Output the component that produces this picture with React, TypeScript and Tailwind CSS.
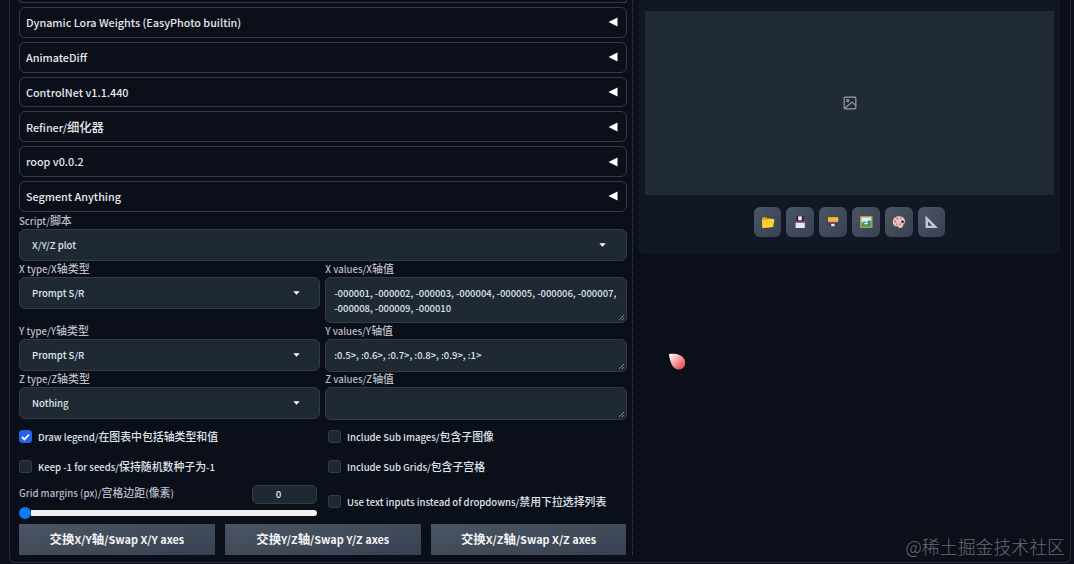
import React from 'react';

const HAN = /([\u4e00-\u9fff]+)/;

const ACCORDIONS = [
  'Dynamic Lora Weights (EasyPhoto builtin)',
  'AnimateDiff',
  'ControlNet v1.1.440',
  'Refiner/细化器',
  'roop v0.0.2',
  'Segment Anything',
];

// Han glyphs are set slightly larger than the Latin next to them
function Mixed({ text }: { text: string }) {
  return (
    <>
      {text.split(HAN).map((part, i) =>
        HAN.test(part) ? <span key={i} className="text-[1.14em]">{part}</span> : part
      )}
    </>
  );
}

function Label({ text }: { text: string }) {
  return <div className="flex h-4 items-center text-[9.6px] font-medium leading-4 text-[#b9bdc6]"><span><Mixed text={text} /></span></div>;
}

function Select({ value, wide }: { value: string; wide?: boolean }) {
  return (
    <div className={`flex h-8 items-center justify-between rounded-md border border-[#323c4a] bg-[#1f2933] pl-3 text-[9.55px] font-medium text-[#dfe3ea] ${wide ? 'pr-5' : 'pr-[19px]'}`}>
      <span>{value}</span>
      <svg width="7" height="4" viewBox="0 0 7 4"><path d="M0.3 0.2h6.4L3.5 3.8z" fill="#fff" /></svg>
    </div>
  );
}

function Area({ value, tall }: { value: string; tall?: boolean }) {
  return (
    <div className={`relative rounded-md border border-[#323c4a] bg-[#1f2933] px-2 pt-2 text-[9.45px] font-medium leading-[15px] text-[#dfe3ea] ${tall ? 'h-[46px]' : 'h-[33px]'}`}>
      <div className="whitespace-pre">{value}</div>
      <svg className="absolute right-0.5 bottom-0.5" width="5" height="5" viewBox="0 0 5 5" stroke="#9aa1ab" strokeWidth="0.8"><path d="M0 5L5 0M3 5L5 3" /></svg>
    </div>
  );
}

function Check({ text, checked }: { text: string; checked?: boolean }) {
  return (
    <div className="flex h-4 items-center gap-1.5 text-[9.55px] font-medium leading-4 text-[#dfe3ea]">
      <span className={`flex size-[13px] shrink-0 items-center justify-center rounded-[3px] border ${checked ? 'border-[#2563eb] bg-[#2563eb]' : 'border-[#333c48] bg-[#1f2933]'}`}>
        {checked && <svg width="9" height="8" viewBox="0 0 9 8" fill="none" stroke="#fff" strokeWidth="1.8"><path d="M1 4l2.4 2.4L8 1.5" /></svg>}
      </span>
      <span className="whitespace-nowrap"><Mixed text={text} /></span>
    </div>
  );
}

const TOOLS = [
  <g key="folder">
    <path d="M1 3.2l1-1 3.5.3 1 1 5 .2.3 1.5L10.8 12 1.5 13z" fill="#e9a90d" />
    <path d="M1 5l5 .2 1.500-1.400 6 .5L12.200 12l-10.700 1z" fill="#fcd22f" />
  </g>,
  <g key="floppy">
    <path d="M3.5 1h7v6h-7z" fill="#20232d" />
    <path d="M5.2 1.3h3.6v4H5.2z" fill="#f4eff5" />
    <path d="M2 6h10.5v2H2z" fill="#8d3a72" />
    <path d="M2.6 7.8h9.2V13H2.6z" fill="#efe4f3" />
  </g>,
  <g key="box">
    <path d="M2 2h10v5.500H2z" fill="#e9a43a" />
    <path d="M2 3.500h10.500v2H2z" fill="#f7c33d" />
    <path d="M1.3 7.5h11.5v1.600L10 11H4L1.300 9z" fill="#55306f" />
    <path d="M5.200 8.800h3.400v2.400H5.200z" fill="#f1e9f7" />
  </g>,
  <g key="picture">
    <path d="M1 1h12.500v12H1z" fill="#b9954c" />
    <path d="M2.400 2.400h9.700v9.200H2.400z" fill="#d9f1ea" />
    <path d="M2.400 8l2.800-2 2 1.500 3-2.600 1.900 1.400v5.300H2.400z" fill="#25a18e" />
    <path d="M2.400 10l3-.8 3 1 3.700-2v3.400H2.400z" fill="#4f8f3f" />
    <path d="M5 8.500l3-1 1 1.200-3 .8z" fill="#fff" />
  </g>,
  <g key="palette">
    <path d="M7 1.200c-3.800 0-6.200 2.400-6.200 5.700 0 3 2 4.600 4 4.300 1.400-.2 1.600.2 1.800 1.200.3 1.200 3.400.5 4.200-1 .6-1.200.5-2 1.300-2.600C14 7 13.500 1.200 7 1.200z" fill="#f0c0bd" />
    <circle cx="3.200" cy="6.500" r="0.900" fill="#c64661" />
    <circle cx="5.200" cy="3.600" r="0.900" fill="#a65290" />
    <circle cx="8.800" cy="3.400" r="0.900" fill="#7c8fb0" />
    <circle cx="4.500" cy="9.300" r="0.800" fill="#a5705a" />
    <circle cx="10.600" cy="6.800" r="1.400" fill="#2a2b38" />
    <circle cx="7.900" cy="9.300" r="0.800" fill="#b23949" />
  </g>,
  <path key="ruler" d="M1.500 0.500v12.500h12.500zM4 6.600l4.200 4.200H4z" fill="#c3c7d1" fillRule="evenodd" />,
];

export default function App() {
  return (
    <div className="relative h-[564px] w-[1074px] overflow-hidden bg-[#0b0f19] pl-[9px] font-['Noto_Sans_CJK_SC',sans-serif] text-[#e5e7eb]">
      <div className="flex h-[563px] w-[1062px] rounded-b-md border border-t-0 border-[#272d39]">
        <div className="flex h-[555px] w-[623px] flex-col border-r border-dotted border-[#414854] pl-[9px]">
          <div className="h-[3px] w-[607.500px] shrink-0 rounded-b-md border border-t-0 border-[#343b47]" />
          <div className="mt-1 flex w-[607.500px] flex-col gap-1">
            {ACCORDIONS.map(title => (
              <div key={title} className="flex h-[30.8px] items-center justify-between rounded-md border border-[#343b47] pr-2 pl-1.5 text-[10.800px] font-medium">
                <span><Mixed text={title} /></span>
                <svg width="10" height="10" viewBox="0 0 10 10"><path d="M0.5 5L9.500 0.500v9z" fill="#fff" /></svg>
              </div>
            ))}
          </div>
          <div className="mt-px w-[607.500px]">
            <Label text="Script/脚本" />
            <Select value="X/Y/Z plot" wide />
          </div>
          <div className="grid w-[607.500px] grid-cols-2 gap-x-[5px]">
            <div className="h-[62px]"><Label text="X type/X轴类型" /><Select value="Prompt S/R" /></div>
            <div className="h-[62px]"><Label text="X values/X轴值" /><Area value={'-000001, -000002, -000003, -000004, -000005, -000006, -000007,\n-000008, -000009, -000010'} tall /></div>
            <div className="h-12"><Label text="Y type/Y轴类型" /><Select value="Prompt S/R" /></div>
            <div className="h-12"><Label text="Y values/Y轴值" /><Area value=":0.5>, :0.6>, :0.7>, :0.8>, :0.9>, :1>" /></div>
            <div className="h-12"><Label text="Z type/Z轴类型" /><Select value="Nothing" /></div>
            <div className="h-12"><Label text="Z values/Z轴值" /><Area value="" /></div>
          </div>
          <div className="mt-[10px] flex w-[607.500px]">
            <div className="w-[309px]">
              <Check text="Draw legend/在图表中包括轴类型和值" checked />
              <div className="mt-3.5"><Check text="Keep -1 for seeds/保持随机数种子为-1" /></div>
              <div className="mt-[10px] flex w-[298px] items-start justify-between">
                <Label text="Grid margins (px)/宫格边距(像素)" />
                <div className="flex h-[19px] w-[65px] items-center justify-center rounded-[5px] border border-[#323c4a] bg-[#1f2933] pr-3 text-[9.700px] font-medium">0</div>
              </div>
              <div className="mt-[3px] flex h-3 w-[298px] items-center">
                <span className="size-3 rounded-full bg-[#0b7bf6]" />
                <span className="h-1.5 grow rounded-r-full bg-[#efefef]" />
              </div>
            </div>
            <div>
              <Check text="Include Sub Images/包含子图像" />
              <div className="mt-3.5"><Check text="Include Sub Grids/包含子宫格" /></div>
              <div className="mt-[19px]"><Check text="Use text inputs instead of dropdowns/禁用下拉选择列表" /></div>
            </div>
          </div>
          <div className="mt-[5px] grid w-[607.500px] grid-cols-3 gap-x-[10px]">
            {['交换X/Y轴/Swap X/Y axes', '交换Y/Z轴/Swap Y/Z axes', '交换X/Z轴/Swap X/Z axes'].map(t => (
              <div key={t} className="flex h-[31px] items-center justify-center bg-linear-to-br from-[#4b5563] to-[#374151] text-[10.900px] font-bold text-[#f3f4f6]">
                <span><Mixed text={t} /></span>
              </div>
            ))}
          </div>
        </div>
        <div className="ml-1.5 flex h-[254px] w-[421px] flex-col items-center rounded-b-md bg-[#111825] pt-[11px]">
          <div className="flex h-[184px] w-[409px] items-center justify-center bg-[#212b36]">
            <svg width="14" height="14" viewBox="0 0 24 24" fill="none" stroke="#98a0ac" strokeWidth="2" strokeLinecap="round" strokeLinejoin="round">
              <rect x="2" y="2" width="20" height="20" rx="2" />
              <circle cx="8" cy="8" r="1.800" />
              <path d="M3 21L15.500 10.500L22 16" />
            </svg>
          </div>
          <div className="mt-3 flex gap-[5px]">
            {TOOLS.map((icon, i) => (
              <div key={i} className="flex h-[30px] w-[27.8px] items-center justify-center rounded-md bg-linear-to-br from-[#4b5563] to-[#374151]">
                <svg width="14" height="14" viewBox="0 0 14 14">{icon}</svg>
              </div>
            ))}
          </div>
        </div>
      </div>
      {/* pointer */}
      <svg className="absolute top-[353px] left-[668px]" width="19" height="18" viewBox="0 0 19 18">
        <defs>
          <linearGradient id="drop" x1="0" y1="0" x2="1" y2="1">
            <stop offset="0.1" stopColor="#fff0ee" />
            <stop offset="0.8" stopColor="#ee5a5e" />
          </linearGradient>
        </defs>
        <path d="M1 1C8 0 14 2 16.500 6.500C19 12 15 17 10 16.500C4.500 16 1.500 8 1 1z" fill="url(#drop)" />
      </svg>
      <div className="absolute right-[9px] bottom-[6px] text-[17.900px] leading-6 font-light text-[#686c75]">@稀土掘金技术社区</div>
    </div>
  );
}
